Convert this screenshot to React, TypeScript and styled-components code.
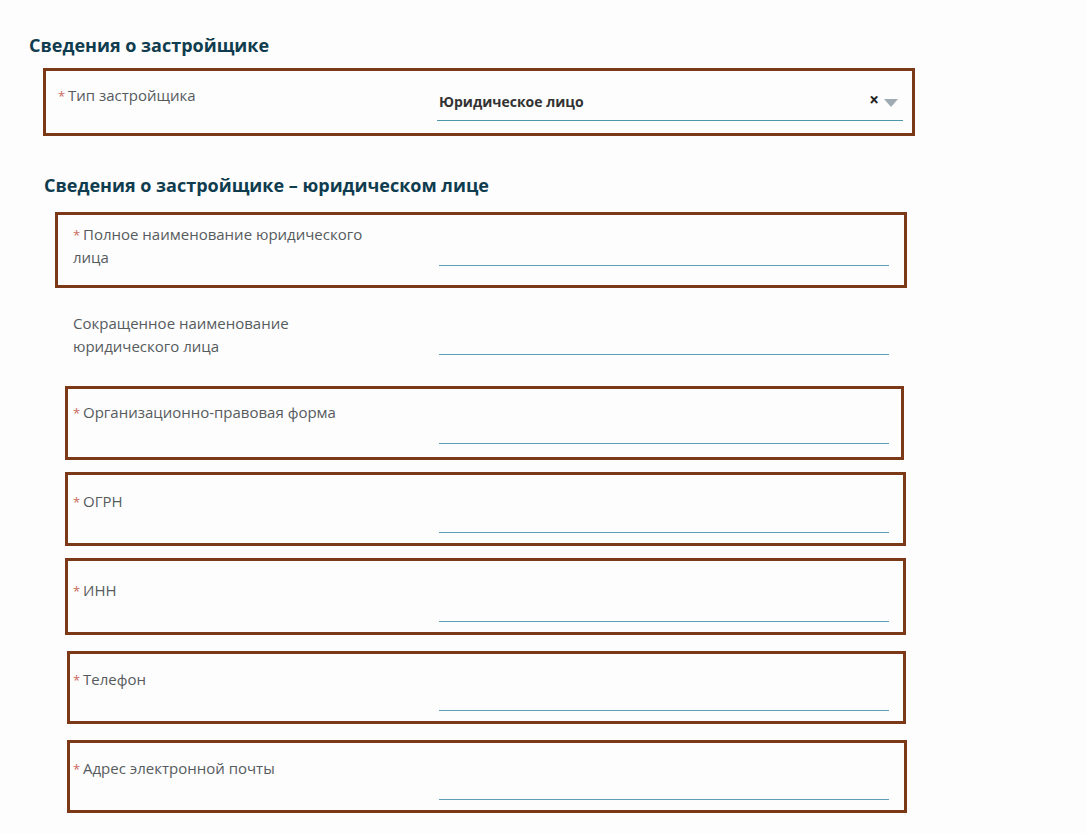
import React from "react";
import styled, { createGlobalStyle } from "styled-components";

const GlobalStyle = createGlobalStyle`
  body {
    margin: 0;
    background: #fdfdfd;
    font-family: "Open Sans", "Noto Sans", Arial, sans-serif;
  }
`;

type Frame = { top: number; left: number; right: number; height: number };

type Field = {
  label: string;
  required: boolean;
  frame?: Frame;
};

const fields: Field[] = [
  { label: "Полное наименование юридического лица", required: true, frame: { top: -12, left: -18, right: -18, height: 76 } },
  { label: "Сокращенное наименование юридического лица", required: false },
  { label: "Организационно-правовая форма", required: true, frame: { top: -16, left: -8, right: -15, height: 74 } },
  { label: "ОГРН", required: true, frame: { top: -19, left: -8, right: -17, height: 74 } },
  { label: "ИНН", required: true, frame: { top: -22, left: -8, right: -17, height: 77 } },
  { label: "Телефон", required: true, frame: { top: -18, left: -6, right: -17, height: 73 } },
  { label: "Адрес электронной почты", required: true, frame: { top: -18, left: -6, right: -18, height: 73 } },
];

const Page = styled.div`
  padding: 33px 0 0 29px;
  width: 1087px;
  height: 833px;
  box-sizing: border-box;
  overflow: hidden;
`;

const SectionTitle = styled.h2<{ $indent?: number; $gap?: number }>`
  margin: ${(p) => p.$gap ?? 0}px 0 0 ${(p) => p.$indent ?? 0}px;
  font-size: 18px;
  line-height: 24px;
  font-weight: 700;
  color: #0f3c4e;
`;

const Row = styled.div<{ $labelWidth: number; $controlWidth: number; $height: number }>`
  position: relative;
  display: grid;
  grid-template-columns: ${(p) => p.$labelWidth}px ${(p) => p.$controlWidth}px;
  width: ${(p) => p.$labelWidth + p.$controlWidth}px;
  height: ${(p) => p.$height}px;
`;

const Highlight = styled.div<{ $f: Frame }>`
  position: absolute;
  top: ${(p) => p.$f.top}px;
  left: ${(p) => p.$f.left}px;
  right: ${(p) => p.$f.right}px;
  height: ${(p) => p.$f.height}px;
  border: 3px solid #7b3917;
  box-sizing: border-box;
  pointer-events: none;
`;

const Label = styled.div`
  max-width: 300px;
  margin-top: -1px;
  font-size: 15px;
  line-height: 23px;
  color: #565b5d;
`;

const Star = styled.span`
  display: inline-block;
  width: 10px;
  color: #c96a5e;
  font-size: 13px;
  line-height: 12px;
  vertical-align: top;
  margin-top: 6px;
`;

const TextInput = styled.div`
  margin-top: 11px;
  height: 30px;
  border-bottom: 1px solid #5a9fb3;
`;

const SelectBox = styled.div`
  margin-top: 2px;
  height: 33px;
  display: flex;
  align-items: center;
  padding-left: 2px;
  border-bottom: 1px solid #4d97ab;
`;

const SelectValue = styled.span`
  flex: 1;
  font-size: 14px;
  font-weight: 700;
  color: #333;
  margin-top: -4px;
`;

const ClearMark = styled.span`
  font-size: 17px;
  line-height: 17px;
  font-weight: 700;
  color: #222;
  margin-right: 5px;
  margin-top: -8px;
`;

const Caret = styled.span`
  width: 0;
  height: 0;
  border-left: 7px solid transparent;
  border-right: 7px solid transparent;
  border-top: 8px solid #9eabb2;
  margin-right: 5px;
  margin-top: -2px;
`;

const FirstGroup = styled.div`
  margin: 28px 0 0 29px;
`;

const FieldList = styled.div`
  margin: 27px 0 0 44px;
  display: flex;
  flex-direction: column;
`;

export default function App() {
  return (
    <Page>
      <GlobalStyle />
      <SectionTitle>Сведения о застройщике</SectionTitle>
      <FirstGroup>
        <Row $labelWidth={379} $controlWidth={466} $height={51}>
          <Highlight $f={{ top: -17, left: -15, right: -12, height: 68 }} />
          <Label>
            <Star>*</Star>Тип застройщика
          </Label>
          <SelectBox>
            <SelectValue>Юридическое лицо</SelectValue>
            <ClearMark>×</ClearMark>
            <Caret />
          </SelectBox>
        </Row>
      </FirstGroup>
      <SectionTitle $indent={15} $gap={37}>
        Сведения о застройщике – юридическом лице
      </SectionTitle>
      <FieldList>
        {fields.map((f) => (
          <Row key={f.label} $labelWidth={366} $controlWidth={450} $height={89}>
            {f.frame && <Highlight $f={f.frame} />}
            <Label>
              {f.required && <Star>*</Star>}
              {f.label}
            </Label>
            <TextInput />
          </Row>
        ))}
      </FieldList>
    </Page>
  );
}
